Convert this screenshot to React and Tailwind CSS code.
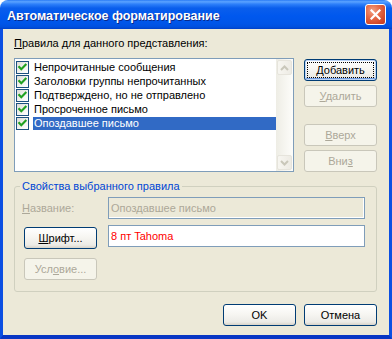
const btnBase =
  "h-[22px] w-[73px] rounded-[3px] border flex items-center justify-center text-[11px] leading-[13px]";
const btnNormal =
  "border-[#003C74] bg-[linear-gradient(to_bottom,#FFFFFF_0%,#F7F6F2_45%,#ECEBE6_85%,#D8D3C8_100%)] text-black";
const btnDisabled = "border-[#C9C7BA] bg-[#F5F4EA] text-[#ACA899]";

function Check() {
  return (
    <div className="w-[13px] h-[13px] shrink-0 border border-[#1C5180] bg-[linear-gradient(135deg,#DCDCD7_0%,#F4F4F1_60%,#FFFFFF_100%)] flex items-center justify-center">
      <svg width="11" height="11" viewBox="0 0 11 11">
        <polyline
          points="2.2,5 4.3,7.3 8.6,2.8"
          fill="none"
          stroke="#21A121"
          strokeWidth="2.1"
          strokeLinecap="square"
        />
      </svg>
    </div>
  );
}

function Row({ text, selected }) {
  return (
    <div className="h-[14px] flex items-start pl-[1px]">
      <Check />
      <div
        className={
          "ml-[4px] flex-1 h-[13px] leading-[13px] pl-[1px] whitespace-nowrap overflow-hidden " +
          (selected ? "bg-[#316AC5] text-white" : "text-black")
        }
      >
        {text}
      </div>
    </div>
  );
}

function ScrollBtn({ up }) {
  return (
    <div className="w-[17px] h-[17px] p-[1px]">
      <div className="w-full h-full rounded-[2px] border border-[#E6E4DC] bg-[linear-gradient(to_right,#F7F6F1,#EDEBE4)] flex items-center justify-center">
        <svg width="9" height="6" viewBox="0 0 9 6">
          <polyline
            points={up ? "1,5 4.5,1.5 8,5" : "1,1 4.5,4.5 8,1"}
            fill="none"
            stroke="#C9C7BA"
            strokeWidth="2"
          />
        </svg>
      </div>
    </div>
  );
}

export default function App() {
  return (
    <div className="w-[392px] h-[339px] bg-white font-['Liberation_Sans',Arial,sans-serif] text-[11px] text-black select-none">
      <div className="w-full h-full flex flex-col rounded-t-[8px] overflow-hidden">
        {/* Title bar */}
        <div className="h-[29px] shrink-0 flex items-center pl-[7px] pr-[6px] pt-[2px] bg-[linear-gradient(to_bottom,#2A7BF5_0%,#5BA3FF_6%,#2E80FA_14%,#0A5EEC_28%,#0058EE_55%,#0055E8_82%,#0050DE_93%,#0040C8_100%)]">
          <span className="text-white font-bold text-[12.5px] leading-[16px] [text-shadow:1px_1px_0_#0A2A8A] whitespace-nowrap">
            Автоматическое форматирование
          </span>
          <div className="ml-auto mb-[2px] w-[21px] h-[21px] rounded-[3px] border border-white bg-[radial-gradient(circle_at_35%_30%,#F3A184_0%,#E56A47_40%,#D2482A_75%,#C23A1E_100%)] flex items-center justify-center">
            <svg width="11" height="11" viewBox="0 0 11 11">
              <path
                d="M1.5 1.5 L9.5 9.5 M9.5 1.5 L1.5 9.5"
                stroke="white"
                strokeWidth="2.2"
                strokeLinecap="square"
              />
            </svg>
          </div>
        </div>

        {/* Body */}
        <div className="flex-1 flex flex-col bg-[#ECE9D8] border-l-[3px] border-r-[3px] border-b-[4px] border-l-[#0B4FE2] border-r-[#0B4FE2] border-b-[#0836C4] pl-[11px] pr-[12px] pt-[8px]">
          <div className="h-[13px] leading-[13px]">
            <span className="underline">П</span>равила для данного представления:
          </div>

          <div className="mt-[8px] flex">
            {/* List */}
            <div className="w-[280px] h-[114px] border border-[#7F9DB9] bg-white flex">
              <div className="flex-1 pt-[2px]">
                <Row text="Непрочитанные сообщения" />
                <Row text="Заголовки группы непрочитанных" />
                <Row text="Подтверждено, но не отправлено" />
                <Row text="Просроченное письмо" />
                <Row text="Опоздавшее письмо" selected />
              </div>
              <div className="w-[17px] flex flex-col bg-[linear-gradient(to_right,#EEEDE5,#FDFDFA)]">
                <ScrollBtn up />
                <div className="flex-1" />
                <ScrollBtn />
              </div>
            </div>

            {/* Right buttons */}
            <div className="ml-[10px] w-[73px] flex flex-col">
              <div
                className={
                  btnBase +
                  " mt-[1px] border-[#003C74] bg-[linear-gradient(to_bottom,#FFFFFF_0%,#F7F6F2_45%,#ECEBE6_85%,#D8D3C8_100%)] shadow-[inset_0_0_0_1px_#BCD4F6,inset_0_-1px_0_1px_#6F9BE0]"
                }
              >
                <div className="w-[67px] h-[16px] border border-dotted border-black flex items-center justify-center">
                  <span>
                    <span className="underline">Д</span>обавить
                  </span>
                </div>
              </div>
              <div className={btnBase + " " + btnDisabled + " mt-[4px]"}>
                <span>
                  <span className="underline">У</span>далить
                </span>
              </div>
              <div className={btnBase + " " + btnDisabled + " mt-[17px]"}>
                <span>
                  <span className="underline">В</span>верх
                </span>
              </div>
              <div className={btnBase + " " + btnDisabled + " mt-[4px]"}>
                <span>
                  Вни<span className="underline">з</span>
                </span>
              </div>
            </div>
          </div>

          {/* Group box */}
          <fieldset className="mt-[8px] w-[363px] border border-[#D0D0BF] rounded-[3px] pb-[11px]">
            <legend className="ml-[5px] px-[2px] leading-[13px] text-[#0046D5]">
              Свойства выбранного правила
            </legend>
            <div className="mt-[4px] flex items-center h-[22px]">
              <div className="w-[93px] pl-[7px] text-[#ACA899]">
                <span className="underline">Н</span>азвание:
              </div>
              <div className="w-[257px] h-[22px] border border-[#7F9DB9] bg-[#ECE9D8] shadow-[inset_-1px_-1px_0_#FFFFFF] pl-[2px] flex items-center text-[#ACA899]">
                Опоздавшее письмо
              </div>
            </div>
            <div className="mt-[6px] flex items-start h-[24px]">
              <div className={btnBase + " " + btnNormal + " ml-[9px] mt-[2px]"}>
                <span>
                  <span className="underline">Ш</span>рифт...
                </span>
              </div>
              <div className="ml-[11px] w-[257px] h-[22px] border border-[#7F9DB9] bg-white pl-[2px] flex items-center text-[#FF0000]">
                8 пт Tahoma
              </div>
            </div>
            <div className={btnBase + " " + btnDisabled + " ml-[9px] mt-[9px]"}>
              <span>
                Усл<span className="underline">о</span>вие...
              </span>
            </div>
          </fieldset>

          {/* Bottom buttons */}
          <div className="mt-[12px] flex justify-end gap-[8px]">
            <div className={btnBase + " " + btnNormal}>OK</div>
            <div className={btnBase + " " + btnNormal}>Отмена</div>
          </div>
        </div>
      </div>
    </div>
  );
}
